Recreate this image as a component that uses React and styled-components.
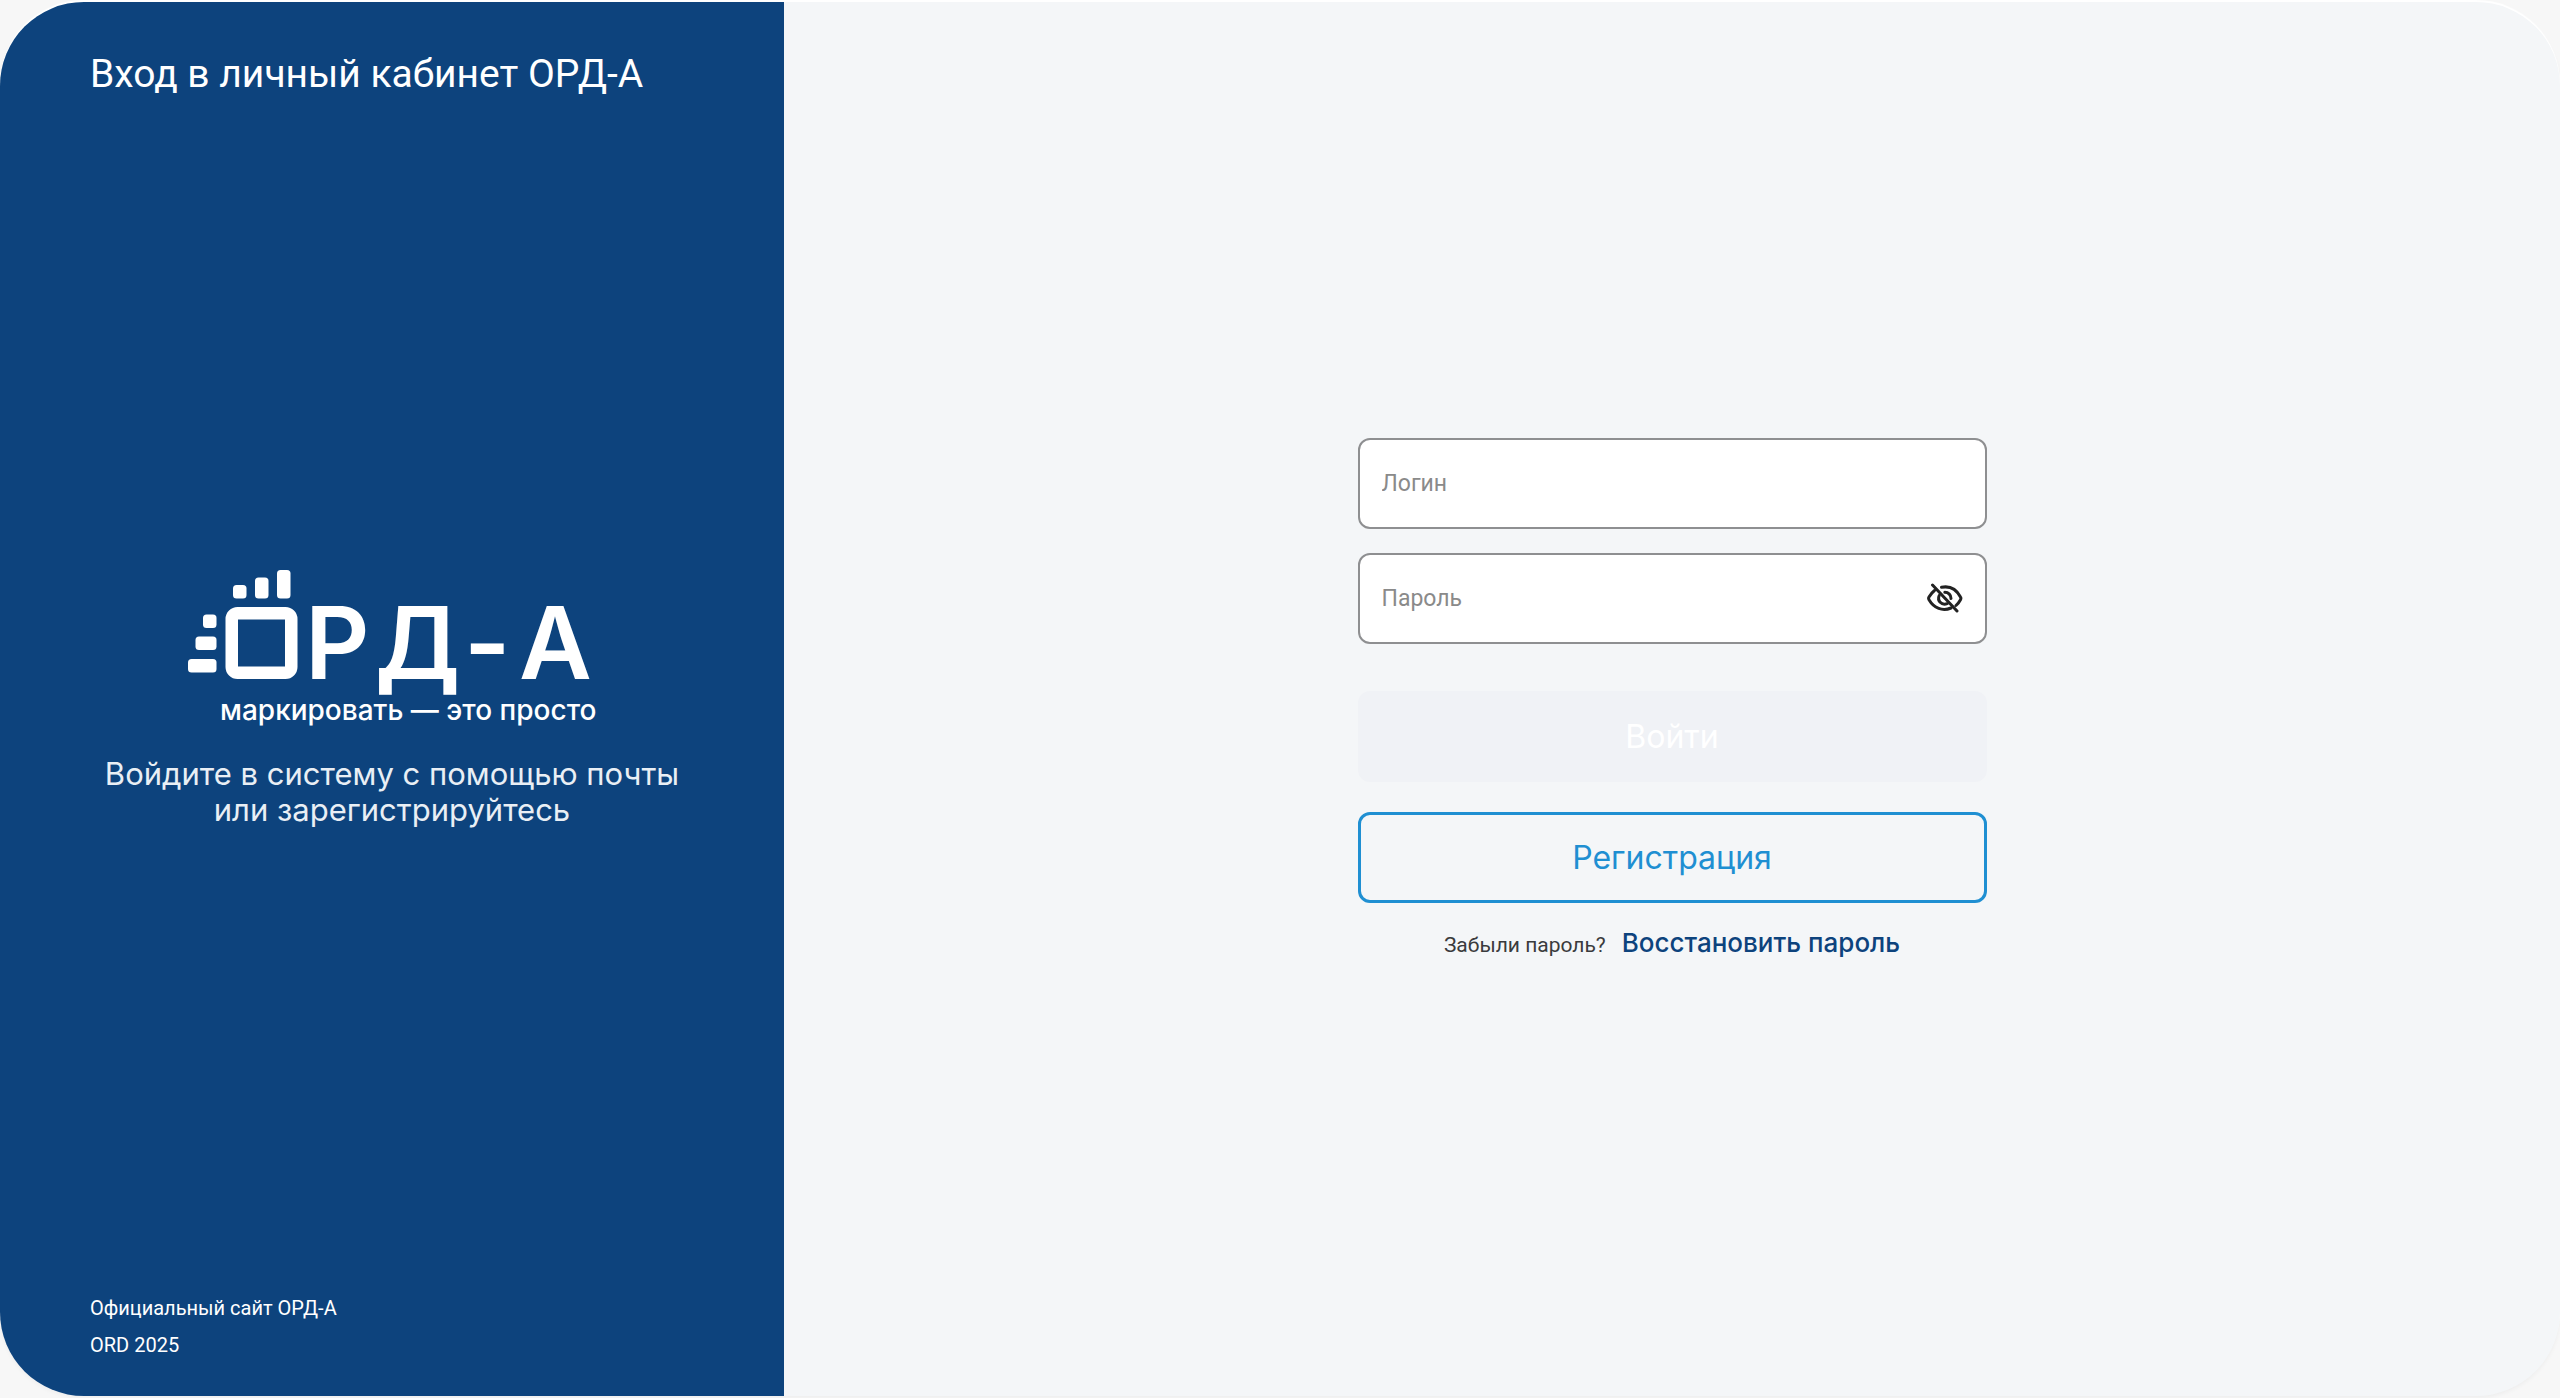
import { useState } from "react";
import styled, { createGlobalStyle } from "styled-components";

const GlobalStyle = createGlobalStyle`
  * {
    box-sizing: border-box;
  }

  body {
    margin: 0;
    background-color: #f7f7f7;
    font-family: Inter, sans-serif;
  }
`;

const Page = styled.div`
  min-height: 100vh;
  padding: 2px 0;
  display: flex;
`;

const Card = styled.div`
  flex: 1;
  border-radius: 84px;
  overflow: hidden;
  background-color: #f4f6f8;
  box-shadow: 0 -2px 1px #fff, 0 2px 4px rgba(0, 0, 0, 0.04);

  display: grid;
  grid-template-columns: 49fr 111fr;
`;

const Sidebar = styled.aside`
  padding: 30px 90px 32px;
  background-color: #0d437d;
  color: #fff;

  display: grid;
  grid-template-rows: 1fr auto 1fr;
`;

const Title = styled.h1`
  margin: 18px 0 0;
  font-family: Roboto, sans-serif;
  font-size: 39px;
  font-weight: 400;
  line-height: 48px;
  white-space: nowrap;
`;

const Brand = styled.div`
  display: flex;
  flex-direction: column;
  align-items: center;
`;

const Logo = styled.div`
  display: flex;
  flex-direction: column;
  align-items: flex-end;
  gap: 12px;
`;

const Wordmark = styled.text`
  font-family: Inter, sans-serif;
  font-size: 100px;
  font-weight: 600;
`;

const Tagline = styled.span`
  font-size: 28px;
  font-weight: 500;
  line-height: 36px;
`;

const Hint = styled.p`
  margin: 28px 0 0;
  font-size: 31px;
  font-weight: 400;
  line-height: 36px;
  text-align: center;
  color: #e9eff5;
`;

const Footer = styled.footer`
  align-self: end;
  display: flex;
  flex-direction: column;
  align-items: flex-start;

  font-family: Roboto, sans-serif;
  font-size: 20px;
  line-height: 37px;
`;

const FooterLink = styled.a`
  color: inherit;
  text-decoration: none;
`;

const Main = styled.main`
  display: flex;
  justify-content: center;
  align-items: center;
`;

const Form = styled.form`
  width: 100%;
  max-width: 629px;
  display: flex;
  flex-direction: column;
`;

const Fields = styled.div`
  display: flex;
  flex-direction: column;
  gap: 24px;
  margin-bottom: 47px;
`;

const Field = styled.div`
  height: 91px;
  padding: 0 22px;
  border: 2px solid #8e8f91;
  border-radius: 12px;
  background-color: #fff;

  display: flex;
  align-items: center;
`;

const Input = styled.input`
  flex: 1;
  min-width: 0;
  height: 100%;
  padding: 0;
  border: none;
  outline: none;
  background: none;
  font-family: Roboto, sans-serif;
  font-size: 23px;
  color: #222;

  &::placeholder {
    color: #8a8a8a;
    opacity: 1;
  }
`;

const EyeButton = styled.button`
  padding: 0;
  border: none;
  background: none;
  color: #222;
  display: flex;

  &:hover {
    cursor: pointer;
  }
`;

const Buttons = styled.div`
  display: flex;
  flex-direction: column;
  gap: 30px;
`;

const Button = styled.button`
  height: 91px;
  border: 3px solid ${(props) => (props.$outlined ? "#1f8fd2" : "#f0f2f6")};
  border-radius: 12px;
  background-color: ${(props) => (props.$outlined ? "transparent" : "#f0f2f6")};
  color: ${(props) => (props.$outlined ? "#1f8fd2" : "#fff")};
  font-family: inherit;
  font-size: 32px;
  font-weight: 400;
`;

const Forgot = styled.div`
  margin-top: 24px;
  display: flex;
  justify-content: center;
  align-items: baseline;
  gap: 16px;

  font-family: Roboto, sans-serif;
  font-size: 21px;
  line-height: 32px;
  color: #3a3b3d;
`;

const ForgotLink = styled.a`
  font-family: Inter, sans-serif;
  font-size: 26px;
  font-weight: 500;
  color: #0d437d;
  text-decoration: none;
`;

function LogoMark() {
  return (
    <svg width="409" height="111" viewBox="0 0 409 111" fill="#fff" role="img" aria-label="ОРД-А" overflow="visible">
      <rect x="45" y="16" width="13.5" height="13.5" rx="3.5" />
      <rect x="67" y="8.5" width="13.5" height="21" rx="3.5" />
      <rect x="89" y="1" width="13.5" height="28.5" rx="3.5" />
      <rect x="15" y="45.5" width="13.5" height="13.5" rx="3.5" />
      <rect x="7.5" y="67.5" width="21" height="13.5" rx="3.5" />
      <rect x="0" y="90" width="28.5" height="13.5" rx="3.5" />
      <path
        fillRule="evenodd"
        d="M49.500 38h48a12 12 0 0 1 12 12v48a12 12 0 0 1-12 12h-48a12 12 0 0 1-12-12v-48a12 12 0 0 1 12-12ZM50 50.500v47h47v-47Z"
      />
      <Wordmark x="117 187 276 331" y="110">
        РД-А
      </Wordmark>
    </svg>
  );
}

function EyeOffIcon() {
  return (
    <svg width="36" height="30" viewBox="0 0 36 30" fill="none" stroke="currentColor" strokeWidth="3" strokeLinecap="round">
      <path d="M14.500 4.300C23 2.600 29.500 6.500 33.500 14c.6 1 .6 1.700 0 2.700-1.200 2.200-2.700 4.200-4.500 5.800" />
      <path d="M7.500 7.500C5.300 9.200 3.500 11.500 2 14c-.6 1-.6 1.700 0 2.700 5 8.500 13.500 11.900 22 8.300" />
      <path d="M12.200 12.500c-2.200 5.200 2.200 10.200 8 8.200" />
      <path d="M17.800 9.300c3.700 0 6.300 2.700 6.200 6.200" />
      <path d="M5.500 2l24.500 26" />
    </svg>
  );
}

function App() {
  const [visible, setVisible] = useState(false);

  return (
    <>
      <GlobalStyle />
      <Page>
        <Card>
          <Sidebar>
            <Title>Вход в личный кабинет ОРД-А</Title>
            <Brand>
              <Logo>
                <LogoMark />
                <Tagline>маркировать — это просто</Tagline>
              </Logo>
              <Hint>
                Войдите в систему с помощью почты
                <br />
                или зарегистрируйтесь
              </Hint>
            </Brand>
            <Footer>
              <FooterLink href="#site">Официальный сайт ОРД-А</FooterLink>
              <span>ORD 2025</span>
            </Footer>
          </Sidebar>
          <Main>
            <Form onSubmit={(e) => e.preventDefault()}>
              <Fields>
                <Field>
                  <Input type="text" name="login" aria-label="Логин" placeholder="Логин" />
                </Field>
                <Field>
                  <Input
                    type={visible ? "text" : "password"}
                    name="password"
                    aria-label="Пароль"
                    placeholder="Пароль"
                  />
                  <EyeButton
                    type="button"
                    aria-label="Показать пароль"
                    onClick={() => setVisible(!visible)}
                  >
                    <EyeOffIcon />
                  </EyeButton>
                </Field>
              </Fields>
              <Buttons>
                <Button type="submit" disabled>
                  Войти
                </Button>
                <Button type="button" $outlined>
                  Регистрация
                </Button>
              </Buttons>
              <Forgot>
                <span>Забыли пароль?</span>
                <ForgotLink href="#restore">Восстановить пароль</ForgotLink>
              </Forgot>
            </Form>
          </Main>
        </Card>
      </Page>
    </>
  );
}

export default App;
